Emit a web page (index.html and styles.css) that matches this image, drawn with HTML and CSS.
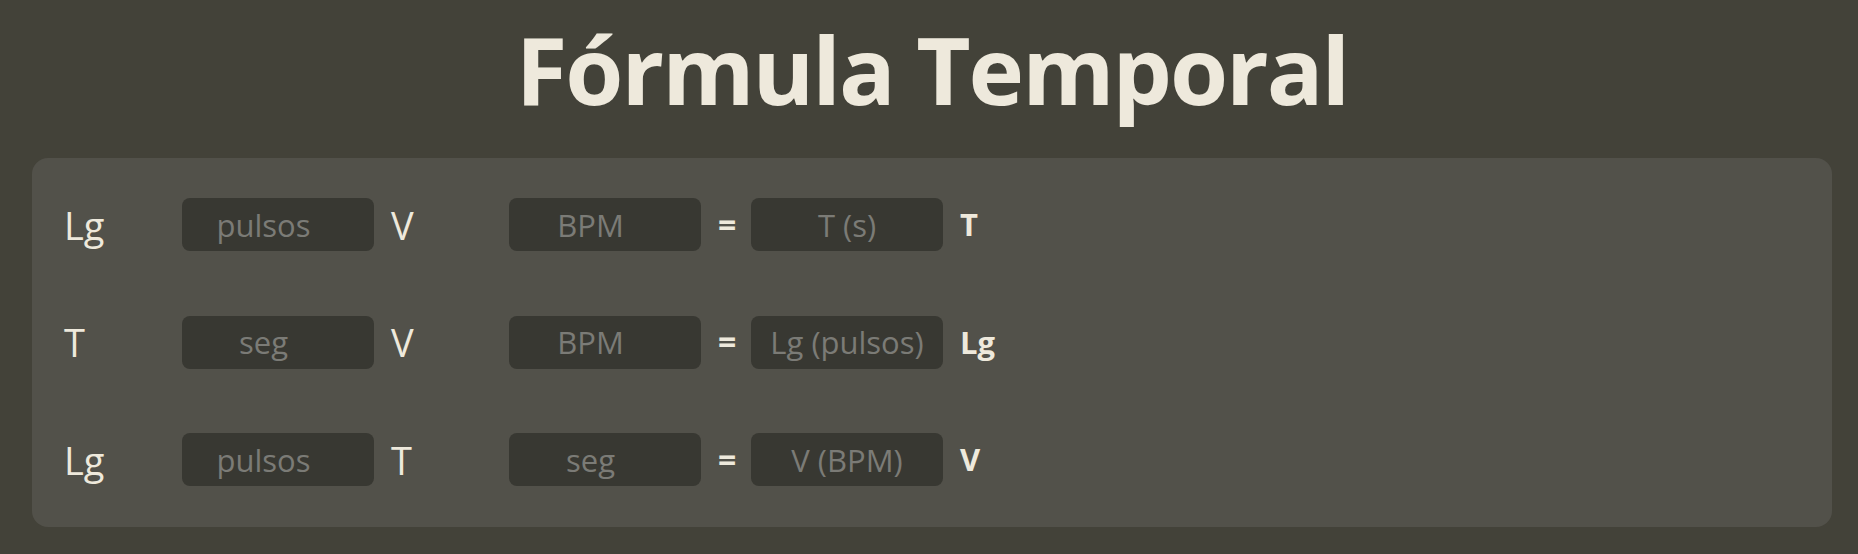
FILE: index.html
```html
<!DOCTYPE html>
<html lang="es">
<head>
<meta charset="utf-8">
<title>Fórmula Temporal</title>
<link rel="stylesheet" href="styles.css">
</head>
<body>
<main class="page">
  <h1 class="title">Fórmula Temporal</h1>
  <section class="panel">
    <div class="row">
      <span class="label">Lg</span>
      <div class="field input"><span class="ph">pulsos</span></div>
      <span class="label">V</span>
      <div class="field input"><span class="ph">BPM</span></div>
      <span class="eq">=</span>
      <div class="field result"><span class="ph">T (s)</span></div>
      <span class="unit">T</span>
    </div>
    <div class="row">
      <span class="label">T</span>
      <div class="field input"><span class="ph">seg</span></div>
      <span class="label">V</span>
      <div class="field input"><span class="ph">BPM</span></div>
      <span class="eq">=</span>
      <div class="field result"><span class="ph">Lg (pulsos)</span></div>
      <span class="unit">Lg</span>
    </div>
    <div class="row">
      <span class="label">Lg</span>
      <div class="field input"><span class="ph">pulsos</span></div>
      <span class="label">T</span>
      <div class="field input"><span class="ph">seg</span></div>
      <span class="eq">=</span>
      <div class="field result"><span class="ph">V (BPM)</span></div>
      <span class="unit">V</span>
    </div>
  </section>
</main>
</body>
</html>
```
FILE: styles.css
```css
* { box-sizing: border-box; }

html, body {
  margin: 0;
  padding: 0;
  background: #434239;
}

body {
  font-family: "Open Sans", "Noto Sans", sans-serif;
  color: #eee9dc;
}

.page {
  padding: 0 26px 0 32px;
  height: 554px;
  overflow: hidden;
}

.title {
  margin: 22px 0 42px;
  font-size: 94px;
  line-height: 94px;
  font-weight: 700;
  letter-spacing: -2px;
  text-align: center;
  color: #eee9dc;
}

.panel {
  background: #52514a;
  border-radius: 16px;
  padding: 40px 32px 41px;
  display: flex;
  flex-direction: column;
  gap: 64.5px;
}

.row {
  display: flex;
  align-items: center;
  gap: 17px;
  height: 53px;
}

.label {
  width: 101px;
  font-size: 38px;
  line-height: 1;
  color: #eee9dc;
}

.field {
  width: 192px;
  height: 53px;
  border-radius: 8px;
  background: #383832;
  display: flex;
  align-items: center;
  justify-content: center;
  font-size: 31px;
  color: #7b7b76;
  white-space: nowrap;
}

.field.input {
  padding: 0 37px 0 8px;
}

.field.result {
  padding: 0 4px;
}

.eq {
  font-size: 32px;
  font-weight: 700;
  line-height: 1;
  width: 16px;
  text-align: center;
}

.unit {
  font-size: 31px;
  font-weight: 700;
  line-height: 1;
}
```
